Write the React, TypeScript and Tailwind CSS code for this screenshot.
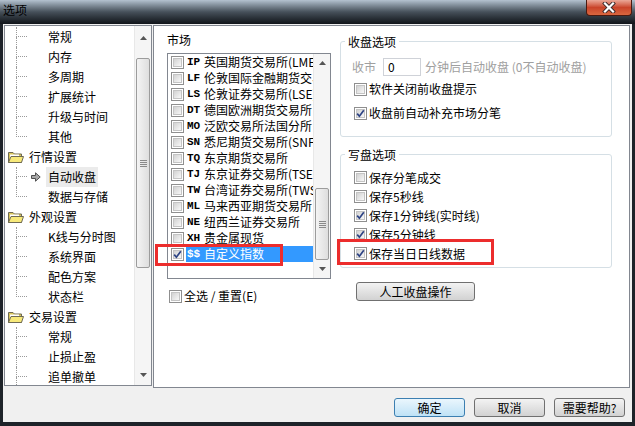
import React from "react";

type Node = { t: string; kind: "child" | "group"; last?: boolean; sel?: boolean };

const tree: Node[] = [
  { t: "常规", kind: "child" },
  { t: "内存", kind: "child" },
  { t: "多周期", kind: "child" },
  { t: "扩展统计", kind: "child" },
  { t: "升级与时间", kind: "child" },
  { t: "其他", kind: "child", last: true },
  { t: "行情设置", kind: "group" },
  { t: "自动收盘", kind: "child", sel: true },
  { t: "数据与存储", kind: "child", last: true },
  { t: "外观设置", kind: "group" },
  { t: "K线与分时图", kind: "child" },
  { t: "系统界面", kind: "child" },
  { t: "配色方案", kind: "child" },
  { t: "状态栏", kind: "child", last: true },
  { t: "交易设置", kind: "group" },
  { t: "常规", kind: "child" },
  { t: "止损止盈", kind: "child" },
  { t: "追单撤单", kind: "child" },
];

const markets: [string, string, boolean?][] = [
  ["IP", "英国期货交易所(LME)"],
  ["LF", "伦敦国际金融期货交易所"],
  ["LS", "伦敦证券交易所(LSE)"],
  ["DT", "德国欧洲期货交易所"],
  ["MO", "泛欧交易所法国分所"],
  ["SN", "悉尼期货交易所(SNFE)"],
  ["TQ", "东京期货交易所"],
  ["TJ", "东京证券交易所(TSE)"],
  ["TW", "台湾证券交易所(TWSE)"],
  ["ML", "马来西亚期货交易所"],
  ["NE", "纽西兰证券交易所"],
  ["XH", "贵金属现货"],
  ["$$", "自定义指数", true],
];

const Check = ({ checked = false }: { checked?: boolean }) => (
  <span className="flex h-[13px] w-[13px] shrink-0 items-center justify-center border border-[#8f8f8f] bg-white">
    <span className="relative h-[9px] w-[9px] border border-[#c4c4c4] bg-gradient-to-br from-[#d2d2d2] to-[#f8f8f8]">
      {checked && (
        <svg className="absolute -left-[1px] -top-[1px] overflow-visible" width="9" height="9" viewBox="0 0 9 9">
          <path d="M1.2 4.6 L3.4 7.2 L7.8 1.2" fill="none" stroke="#2d4384" strokeWidth="1.7" />
        </svg>
      )}
    </span>
  </span>
);

const Folder = () => (
  <svg width="16" height="13" viewBox="0 0 16 13">
    <path d="M0.5 1.5 H5 L6.5 3 H13.5 V11.5 H0.5 Z" fill="#d9c65a" stroke="#6f6a55" />
    <path d="M2 3.5 H11 V8 H2 Z" fill="#ffffff" />
    <path d="M0.5 11.5 L3 5.5 H15.5 L13.5 11.5 Z" fill="#f7e97a" stroke="#6f6a55" />
  </svg>
);

const Arrow = ({ up }: { up?: boolean }) => (
  <svg width="7" height="4" viewBox="0 0 7 4">
    <path d={up ? "M0 4 L3.5 0 L7 4 Z" : "M0 0 L3.5 4 L7 0 Z"} fill="#555" />
  </svg>
);

const Thumb = ({ h }: { h: string }) => (
  <div className={`mx-[1px] flex ${h} flex-col items-center justify-center gap-[1px] rounded-[2px] border border-[#9c9c9c] bg-gradient-to-r from-[#f4f4f4] to-[#dedede]`}>
    <div className="h-[1px] w-[7px] bg-[#8a8a8a]" />
    <div className="h-[1px] w-[7px] bg-[#8a8a8a]" />
    <div className="h-[1px] w-[7px] bg-[#8a8a8a]" />
    <div className="h-[1px] w-[7px] bg-[#8a8a8a]" />
  </div>
);

const Btn = ({ label, main }: { label: string; main?: boolean }) => (
  <div
    className={`flex h-[19px] w-[71px] items-center justify-center rounded-[3px] border leading-[15px] ${
      main
        ? "border-[#3c7fb1] bg-gradient-to-b from-[#eaf6fd] to-[#bfe2f6]"
        : "border-[#707070] bg-gradient-to-b from-[#f3f3f3] to-[#d2d2d2]"
    }`}
  >
    {label}
  </div>
);

export default function App() {
  return (
    <div className="flex h-[426px] w-[635px] flex-col overflow-hidden bg-[#1e2329] font-['Noto_Sans_CJK_SC',sans-serif] text-[12px] leading-[16px] text-black">
      {/* title bar */}
      <div className="flex h-[24px] shrink-0 items-start justify-between bg-gradient-to-b from-[#b4c2d0] via-[#46505a] to-[#11151a]">
        <span className="ml-[3px] mt-[2px] text-[12px] leading-[16px] text-black">选项</span>
        <div className="mr-[3px] flex h-[16px] w-[46px] items-center justify-center rounded-b-[4px] border border-t-0 border-[#4a1a10] bg-gradient-to-b from-[#eaa898] via-[#c9442a] to-[#d9673f]">
          <svg width="14" height="11" viewBox="0 0 14 11">
            <path d="M3 1.5 L11 9.5 M11 1.5 L3 9.5" stroke="#3a2a2a" strokeWidth="4" strokeLinecap="square" />
            <path d="M3 1.5 L11 9.5 M11 1.5 L3 9.5" stroke="#ffffff" strokeWidth="2.2" strokeLinecap="square" />
          </svg>
        </div>
      </div>

      {/* body */}
      <div className="mb-[4px] ml-[3px] mr-[3px] flex flex-1 flex-col bg-[#f0f0f0]">
        <div className="flex items-start pl-[1px] pr-[2px] pt-[1px]">
          {/* tree */}
          <div className="flex h-[361px] w-[148px] shrink-0 border border-[#828790] bg-white">
            <div className="flex-1 overflow-hidden pt-[1px]">
              {tree.map((n, i) =>
                n.kind === "group" ? (
                  <div key={i} className="flex h-[20px] items-center">
                    <div className="ml-[3px] flex w-[16px]">
                      <Folder />
                    </div>
                    <span className="ml-[5px] whitespace-nowrap">{n.t}</span>
                  </div>
                ) : (
                  <div key={i} className="flex h-[20px]">
                    <div className="w-[11px] shrink-0" />
                    <div className="flex w-[11px] shrink-0 flex-col">
                      <div className="h-[10px] border-b border-l border-dotted border-[#9a9a9a]" />
                      <div className={`h-[10px] ${n.last ? "" : "border-l border-dotted border-[#9a9a9a]"}`} />
                    </div>
                    <div className="flex w-[19px] shrink-0 items-center">
                      {n.sel && (
                        <svg className="ml-[4px]" width="10" height="10" viewBox="0 0 10 10">
                          <path d="M0.5 3.5 H4.5 V0.8 L9.2 5 L4.5 9.2 V6.5 H0.5 Z" fill="#a8a8a8" stroke="#4f4f4f" />
                        </svg>
                      )}
                    </div>
                    <span className={`flex items-center whitespace-nowrap px-[2px] ${n.sel ? "bg-[#ebebeb]" : ""}`}>{n.t}</span>
                  </div>
                )
              )}
            </div>
            <div className="flex w-[17px] shrink-0 flex-col border-l border-[#e8e8e8] bg-[#f5f5f5]">
              <div className="flex h-[24px] items-center justify-center">
                <Arrow up />
              </div>
              <div className="h-[8px]" />
              <Thumb h="h-[210px]" />
              <div className="flex-1" />
              <div className="flex h-[20px] items-center justify-center">
                <Arrow />
              </div>
            </div>
          </div>

          {/* right pane */}
          <div className="relative ml-[1px] flex h-[363px] flex-1 border border-[#828790] bg-white pl-[13px] pt-[6px]">
            {/* market column */}
            <div className="flex w-[164px] shrink-0 flex-col">
              <div className="leading-[16px]">市场</div>
              <div className="mt-[5px] flex h-[226px] border border-[#828790] bg-white">
                <div className="flex-1 overflow-hidden pl-[3px]">
                  {markets.map(([code, name, sel], i) => (
                    <div key={i} className="flex h-[16px] items-center">
                      <Check checked={sel} />
                      <div
                        className={`ml-[2px] flex h-[16px] flex-1 items-center whitespace-nowrap pl-[1px] ${
                          sel ? "bg-[#3399ff] text-white" : ""
                        }`}
                      >
                        <span className="w-[17px] shrink-0 font-['Liberation_Mono',monospace] text-[11px] font-bold">{code}</span>
                        <span>{name}</span>
                      </div>
                    </div>
                  ))}
                </div>
                <div className="flex w-[17px] shrink-0 flex-col border-l border-[#e8e8e8] bg-[#f5f5f5]">
                  <div className="flex h-[17px] items-center justify-center">
                    <Arrow up />
                  </div>
                  <div className="h-[117px]" />
                  <Thumb h="h-[72px]" />
                  <div className="flex flex-1 items-center justify-center">
                    <Arrow />
                  </div>
                </div>
              </div>
              <div className="ml-[2px] mt-[10px] flex h-[14px] items-center gap-[2px]">
                <Check />
                <span className="whitespace-nowrap">全选 / 重置(E)</span>
              </div>
            </div>

            {/* options column */}
            <div className="ml-[9px] flex w-[272px] shrink-0 flex-col">
              <div className="mt-[9px] h-[96px] rounded-[3px] border border-[#d5dfe5] pl-[13px]">
                <div className="-ml-[9px] -mt-[9px] w-fit bg-white px-[3px] leading-[18px]">收盘选项</div>
                <div className="mt-[7px] flex h-[18px] items-center text-[#a0a0a0]">
                  <span className="-ml-[2px]">收市</span>
                  <div className="ml-[7px] flex h-[18px] w-[38px] items-center border border-[#cfd2d8] pl-[4px] text-black">0</div>
                  <span className="ml-[4px] whitespace-nowrap">分钟后自动收盘 (0不自动收盘)</span>
                </div>
                <div className="mt-[4px] flex h-[18px] items-center gap-[2px]">
                  <Check />
                  <span>软件关闭前收盘提示</span>
                </div>
                <div className="mt-[6px] flex h-[18px] items-center gap-[2px]">
                  <Check checked />
                  <span>收盘前自动补充市场分笔</span>
                </div>
              </div>

              <div className="mt-[17px] h-[114px] rounded-[3px] border border-[#d5dfe5] pl-[13px]">
                <div className="-ml-[9px] -mt-[9px] w-fit bg-white px-[3px] leading-[18px]">写盘选项</div>
                <div className="mt-[4px]">
                  {[
                    ["保存分笔成交", false],
                    ["保存5秒线", false],
                    ["保存1分钟线(实时线)", true],
                    ["保存5分钟线", true],
                    ["保存当日日线数据", true],
                  ].map(([t, c], i) => (
                    <div key={i} className="flex h-[19px] items-center gap-[2px]">
                      <Check checked={c as boolean} />
                      <span className="whitespace-nowrap">{t as string}</span>
                    </div>
                  ))}
                </div>
              </div>

              <div className="ml-[16px] mt-[14px] flex h-[19px] w-[119px] items-center justify-center rounded-[3px] border border-[#707070] bg-gradient-to-b from-[#f3f3f3] to-[#d2d2d2] leading-[15px]">
                人工收盘操作
              </div>
            </div>

            {/* annotation boxes */}
            <div className="absolute left-[1px] top-[218px] h-[22px] w-[128px] border-[3px] border-[#ec2d2d]" />
            <div className="absolute left-[183px] top-[213px] h-[26px] w-[157px] border-[3px] border-[#ec2d2d]" />
          </div>
        </div>

        {/* footer */}
        <div className="flex justify-end gap-[9px] pr-[7px] pt-[10px]">
          <Btn label="确定" main />
          <Btn label="取消" />
          <Btn label="需要帮助?" />
        </div>
      </div>
    </div>
  );
}
